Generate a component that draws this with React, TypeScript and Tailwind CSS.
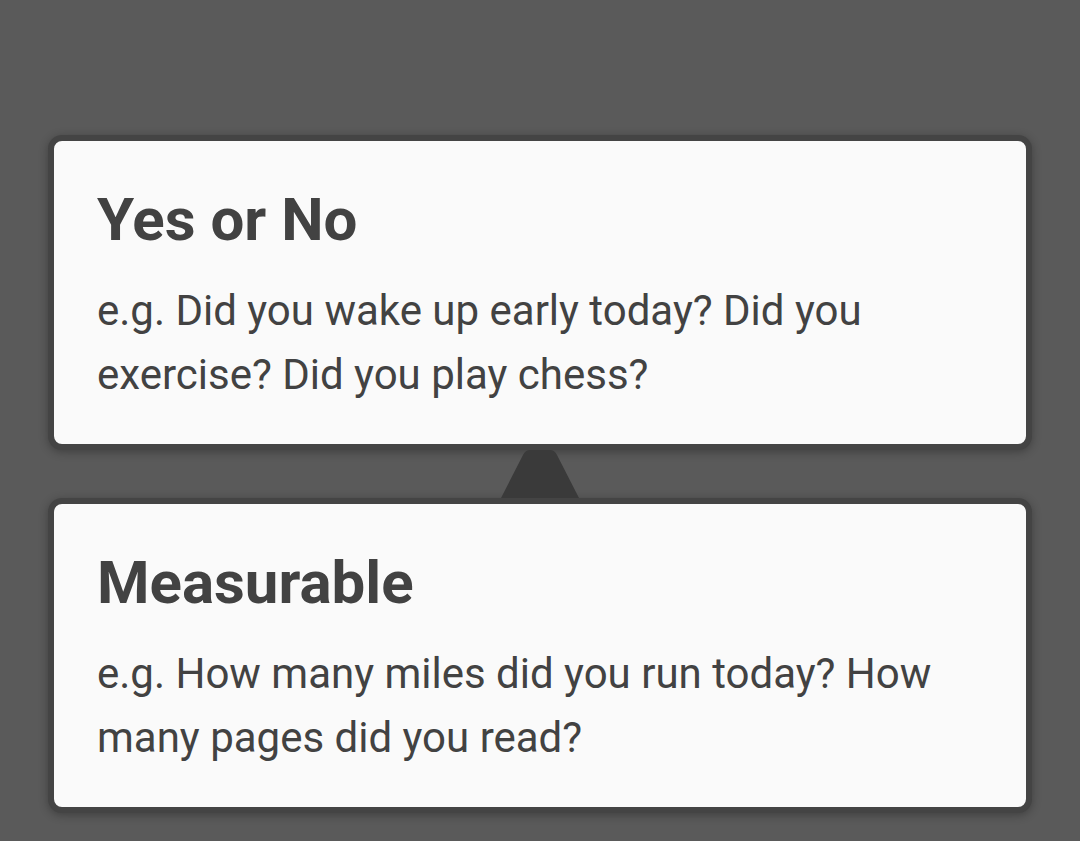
import React from "react";

function Card({ title, body }: { title: string; body: string }) {
  return (
    <div className="rounded-[14px] border-[6px] border-[#444444] bg-[#fafafa] shadow-[0_2px_10px_rgba(0,0,0,0.3)]">
      <div className="px-[43px] pt-[43px] pb-[37px]">
        <div className="text-[60px] font-bold leading-[72px] text-[#424242]">{title}</div>
        <div className="mt-[23px] text-[42px] leading-[64px] text-[#424242]">{body}</div>
      </div>
    </div>
  );
}

export default function App() {
  return (
    <div
      className="w-[1080px] h-[841px] overflow-hidden bg-[#5a5a5a] px-[48px] pt-[135px]"
      style={{ fontFamily: "Roboto, 'Noto Sans', sans-serif" }}
    >
      <Card
        title="Yes or No"
        body="e.g. Did you wake up early today? Did you exercise? Did you play chess?"
      />
      <div className="flex h-[48px] justify-center">
        <svg width="78" height="48" viewBox="0 0 78 48" className="block">
          <path d="M0 48 L22 5 Q24.5 0 29 0 L49 0 Q53.5 0 56 5 L78 48 Z" fill="#3a3a3a" />
        </svg>
      </div>
      <Card
        title="Measurable"
        body="e.g. How many miles did you run today? How many pages did you read?"
      />
    </div>
  );
}
